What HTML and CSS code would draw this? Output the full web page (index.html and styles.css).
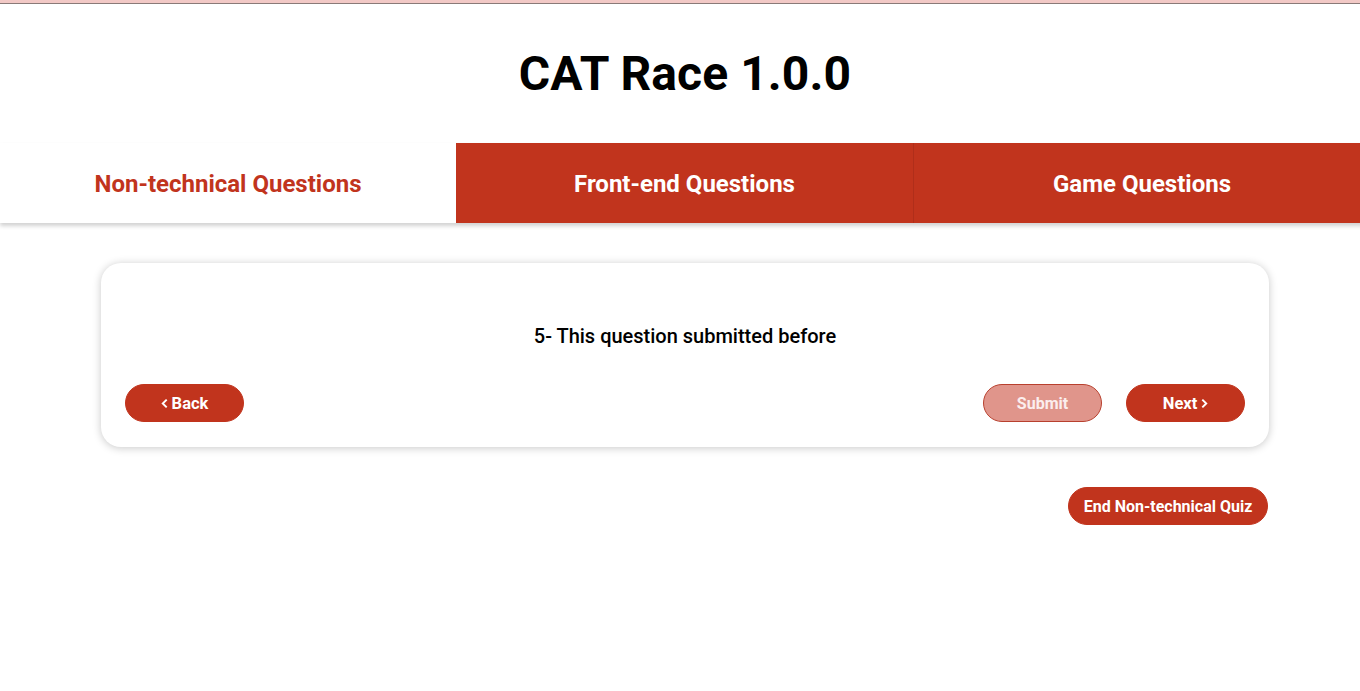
FILE: index.html
```html
<!DOCTYPE html>
<html>
<head>
<meta charset="utf-8">
<link rel="stylesheet" href="styles.css">
</head>
<body>
<div class="page">
<div class="topbar"></div>
<header class="header"><h1 class="title">CAT Race 1.0.0</h1></header>
<nav class="tabs">
  <div class="tab active">Non-technical Questions</div>
  <div class="tab">Front-end Questions</div>
  <div class="tab">Game Questions</div>
</nav>
<main class="main">
  <section class="card">
    <p class="question">5- This question submitted before</p>
    <div class="actions">
      <button class="btn nav"><svg class="chev" viewBox="0 0 8 12" width="7" height="11"><path d="M6.5 1.5 L2 6 L6.5 10.5" fill="none" stroke="currentColor" stroke-width="2.2"/></svg>Back</button>
      <div class="right">
        <button class="btn disabled">Submit</button>
        <button class="btn nav">Next<svg class="chev r" viewBox="0 0 8 12" width="7" height="11"><path d="M1.5 1.5 L6 6 L1.5 10.5" fill="none" stroke="currentColor" stroke-width="2.2"/></svg></button>
      </div>
    </div>
  </section>
  <div class="end-row"><button class="btn end">End Non-technical Quiz</button></div>
</main>
</div>
</body>
</html>
```
FILE: styles.css
```css
* { box-sizing: border-box; }
html, body { margin: 0; padding: 0; background: #fff; overflow: hidden; }
body { font-family: Roboto, "Liberation Sans", sans-serif; color: #000; }
.page { width: 1370px; }
.topbar { height: 4px; background: #f2c9c6; border-bottom: 1px solid #8a7a78; }
.header { height: 139px; display: flex; justify-content: center; align-items: flex-start; }
.title { margin: 0; padding-top: 42px; font-size: 48px; font-weight: 700; line-height: 56px; letter-spacing: 0.1px; }
.tabs { display: grid; grid-template-columns: 456px 457px 457px; height: 80px; box-shadow: 0 3px 4px rgba(0,0,0,0.18); }
.tab { display: flex; align-items: center; justify-content: center; font-size: 24px; font-weight: 700; background: #c1341d; color: #fff; padding-top: 2px; }
.tab + .tab + .tab { border-left: 1px solid #b02e1a; }
.tab.active { background: #fff; color: #c1341d; }
.main { padding: 40px 101px 0 101px; }
.card { height: 184px; border-radius: 20px; background: #fff; box-shadow: 0 1px 8px rgba(0,0,0,0.22); padding: 0 24px; display: flex; flex-direction: column; }
.question { margin: 0; padding-top: 61px; text-align: center; font-size: 20px; font-weight: 500; line-height: 24px; }
.actions { margin-top: 36px; display: flex; justify-content: space-between; }
.right { display: flex; gap: 24px; }
.btn { width: 119px; height: 38px; border-radius: 19px; border: 1px solid #c1341d; background: #c1341d; color: #fff; font-family: Roboto, "Liberation Sans", sans-serif; font-size: 16px; font-weight: 700; padding: 0; cursor: pointer; display: inline-flex; align-items: center; justify-content: center; gap: 4px; }
.btn.nav { font-size: 16.5px; }
.btn.disabled { background: #e0958b; border-color: #b8402e; color: #fbeeee; }
.chev { display: block; margin-top: 1px; }
.end-row { display: flex; justify-content: flex-end; padding-top: 40px; padding-right: 1px; }
.btn.end { width: 200px; }
```
